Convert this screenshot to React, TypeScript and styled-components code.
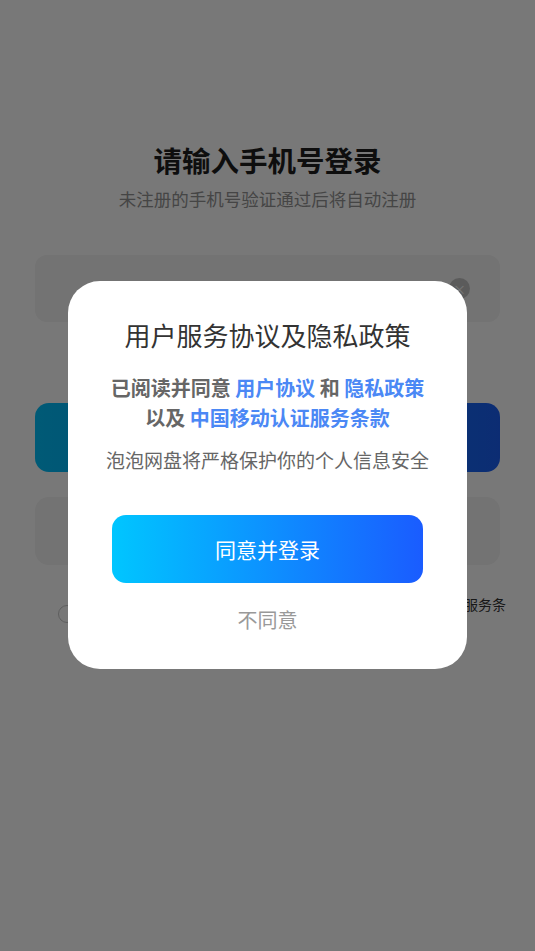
import React from "react";
import styled, { createGlobalStyle } from "styled-components";

const GlobalStyle = createGlobalStyle`
  html, body {
    margin: 0;
    padding: 0;
    background: #ffffff;
    font-family: "Noto Sans CJK SC", "Noto Sans", sans-serif;
  }
`;

const Page = styled.div`
  position: relative;
  width: 535px;
  height: 951px;
  overflow: hidden;
  background: #ffffff;
  box-sizing: border-box;
  padding: 140px 35px 0;
  display: flex;
  flex-direction: column;
`;

const Title = styled.h1`
  margin: 0;
  font-size: 28.5px;
  line-height: 40px;
  font-weight: 700;
  color: #1f1f1f;
  text-align: center;
`;

const Subtitle = styled.p`
  margin: 7px 0 0;
  font-size: 17.5px;
  line-height: 24px;
  color: #939393;
  text-align: center;
`;

const InputBox = styled.div`
  flex: none;
  margin-top: 44px;
  height: 67px;
  border-radius: 12px;
  background: #f4f4f4;
  display: flex;
  align-items: center;
  justify-content: flex-end;
  padding: 0 30px;
`;

const ClearDot = styled.span`
  width: 21px;
  height: 21px;
  border-radius: 50%;
  background: #c2c2c2;
  color: #ffffff;
  font-size: 13px;
  line-height: 21px;
  text-align: center;
`;

const MainButton = styled.div`
  flex: none;
  margin-top: 81px;
  height: 69px;
  border-radius: 14px;
  background: linear-gradient(90deg, #00c0fa 0%, #1a5ff5 100%);
  color: #ffffff;
  font-size: 20px;
  display: flex;
  align-items: center;
  justify-content: center;
`;

const GrayButton = styled.div`
  flex: none;
  margin-top: 25px;
  height: 68px;
  border-radius: 14px;
  background: #f4f4f4;
  color: #333;
  font-size: 18px;
  display: flex;
  align-items: center;
  justify-content: center;
`;

const AgreeRow = styled.div`
  margin: 29px -7px 0 23px;
  display: flex;
  align-items: center;
  gap: 10px;
`;

const Radio = styled.span`
  flex: none;
  width: 16px;
  height: 16px;
  border-radius: 50%;
  border: 1.5px solid #c8c8c8;
`;

const AgreeText = styled.p`
  margin: 0;
  width: 421px;
  font-size: 14px;
  line-height: 20px;
  color: #333333;
`;

const Overlay = styled.div`
  position: absolute;
  inset: 0;
  background: rgba(0, 0, 0, 0.53);
  display: flex;
  justify-content: center;
  padding-top: 281px;
  box-sizing: border-box;
`;

const Dialog = styled.div`
  width: 399px;
  height: 388px;
  box-sizing: border-box;
  background: #ffffff;
  border-radius: 32px;
  padding: 35px 20px 0;
  display: flex;
  flex-direction: column;
  align-items: center;
`;

const DialogTitle = styled.h2`
  margin: 0;
  font-size: 26px;
  line-height: 38px;
  font-weight: 400;
  color: #333333;
`;

const Terms = styled.p`
  margin: 19px 0 0;
  font-size: 20px;
  line-height: 30px;
  font-weight: 700;
  color: #666666;
  text-align: center;
  white-space: nowrap;
`;

const Link = styled.span`
  color: #4b88f5;
`;

const Notice = styled.p`
  margin: 13px 0 0;
  font-size: 19px;
  line-height: 28px;
  color: #666666;
  text-align: center;
  white-space: nowrap;
`;

const AgreeButton = styled.button`
  flex: none;
  margin-top: 41px;
  width: 311px;
  height: 68px;
  border: none;
  border-radius: 14px;
  background: linear-gradient(90deg, #00c6ff 0%, #1a5cff 100%);
  color: #ffffff;
  font-family: inherit;
  font-size: 21px;
  cursor: pointer;
`;

const RejectButton = styled.button`
  margin-top: 22px;
  border: none;
  background: none;
  padding: 0;
  font-family: inherit;
  font-size: 20px;
  line-height: 30px;
  color: #999999;
  cursor: pointer;
`;

export default function App() {
  return (
    <>
      <GlobalStyle />
      <Page>
        <Title>请输入手机号登录</Title>
        <Subtitle>未注册的手机号验证通过后将自动注册</Subtitle>
        <InputBox>
          <ClearDot>×</ClearDot>
        </InputBox>
        <MainButton>获取验证码</MainButton>
        <GrayButton>本机号码一键登录</GrayButton>
        <AgreeRow>
          <Radio />
          <AgreeText>
            已阅读并同意《用户协议》和《隐私政策》以及中国移动认证服务条款
          </AgreeText>
        </AgreeRow>
        <Overlay>
          <Dialog>
            <DialogTitle>用户服务协议及隐私政策</DialogTitle>
            <Terms>
              已阅读并同意 <Link>用户协议</Link> 和 <Link>隐私政策</Link>
              <br />
              以及 <Link>中国移动认证服务条款</Link>
            </Terms>
            <Notice>泡泡网盘将严格保护你的个人信息安全</Notice>
            <AgreeButton>同意并登录</AgreeButton>
            <RejectButton>不同意</RejectButton>
          </Dialog>
        </Overlay>
      </Page>
    </>
  );
}
